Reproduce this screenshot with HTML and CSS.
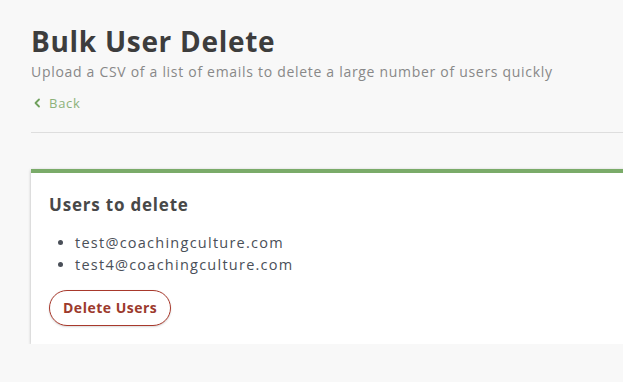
FILE: index.html
```html
<!DOCTYPE html>
<html>
<head>
<meta charset="utf-8">
<link rel="stylesheet" href="styles.css">
</head>
<body>
<main class="page">
  <header class="page-header">
    <h1 class="title">Bulk User Delete</h1>
    <p class="subtitle">Upload a CSV of a list of emails to delete a large number of users quickly</p>
    <a class="back" href="#">
      <svg class="chev" width="8" height="10" viewBox="0 0 8 10"><path d="M6 1.5 L2.5 5 L6 8.5" fill="none" stroke="currentColor" stroke-width="1.8" stroke-linecap="round" stroke-linejoin="round"/></svg>
      <span>Back</span>
    </a>
  </header>
  <hr class="divider">
  <section class="card">
    <h2 class="card-title">Users to delete</h2>
    <ul class="emails">
      <li>test@coachingculture.com</li>
      <li>test4@coachingculture.com</li>
    </ul>
    <button class="btn-delete" type="button">Delete Users</button>
  </section>
</main>
</body>
</html>
```

FILE: styles.css
```css
html, body {
  margin: 0;
  padding: 0;
  background: #f8f8f8;
  overflow: hidden;
}
body {
  font-family: "Open Sans", "Noto Sans", sans-serif;
  color: #444;
}
.page {
  padding: 22px 0 0 31px;
  width: 640px;
}
.page-header {
  display: flex;
  flex-direction: column;
}
.title {
  margin: 0;
  font-size: 28px;
  font-weight: 700;
  color: #3d3d3d;
  line-height: 38px;
  letter-spacing: 0.7px;
}
.subtitle {
  margin: 2px 0 0;
  font-size: 14px;
  color: #888;
  line-height: 20px;
  letter-spacing: 0.7px;
}
.back {
  margin-top: 12px;
  display: flex;
  align-items: center;
  gap: 8px;
  color: #8db27a;
  text-decoration: none;
  font-size: 13px;
  line-height: 18px;
  padding-left: 2px;
  letter-spacing: 0.75px;
}
.chev { color: #6fa05c; }
.divider {
  margin: 20px 0 0;
  border: 0;
  border-top: 1px solid #dedede;
}
.card {
  margin-top: 36px;
  background: #fff;
  border-top: 4px solid #7aab69;
  box-shadow: 0 1px 3px rgba(0,0,0,0.28);
  padding: 20px 18px 18px;
}
.card-title {
  margin: 0;
  font-size: 17px;
  font-weight: 700;
  color: #484848;
  line-height: 24px;
  letter-spacing: 0.8px;
}
.emails {
  margin: 15px 0 0;
  padding-left: 26px;
  font-size: 14.5px;
  line-height: 22px;
  color: #4a4f58;
  letter-spacing: 1.25px;
}
.btn-delete {
  margin-top: 14px;
  font-family: inherit;
  font-size: 14px;
  font-weight: 700;
  color: #9c3a2c;
  background: #fff;
  border: 1px solid #a8392c;
  border-radius: 18px;
  padding: 7px 13px;
  line-height: 20px;
  letter-spacing: 0.5px;
  box-shadow: 0 1px 2px rgba(0,0,0,0.15);
}
```
